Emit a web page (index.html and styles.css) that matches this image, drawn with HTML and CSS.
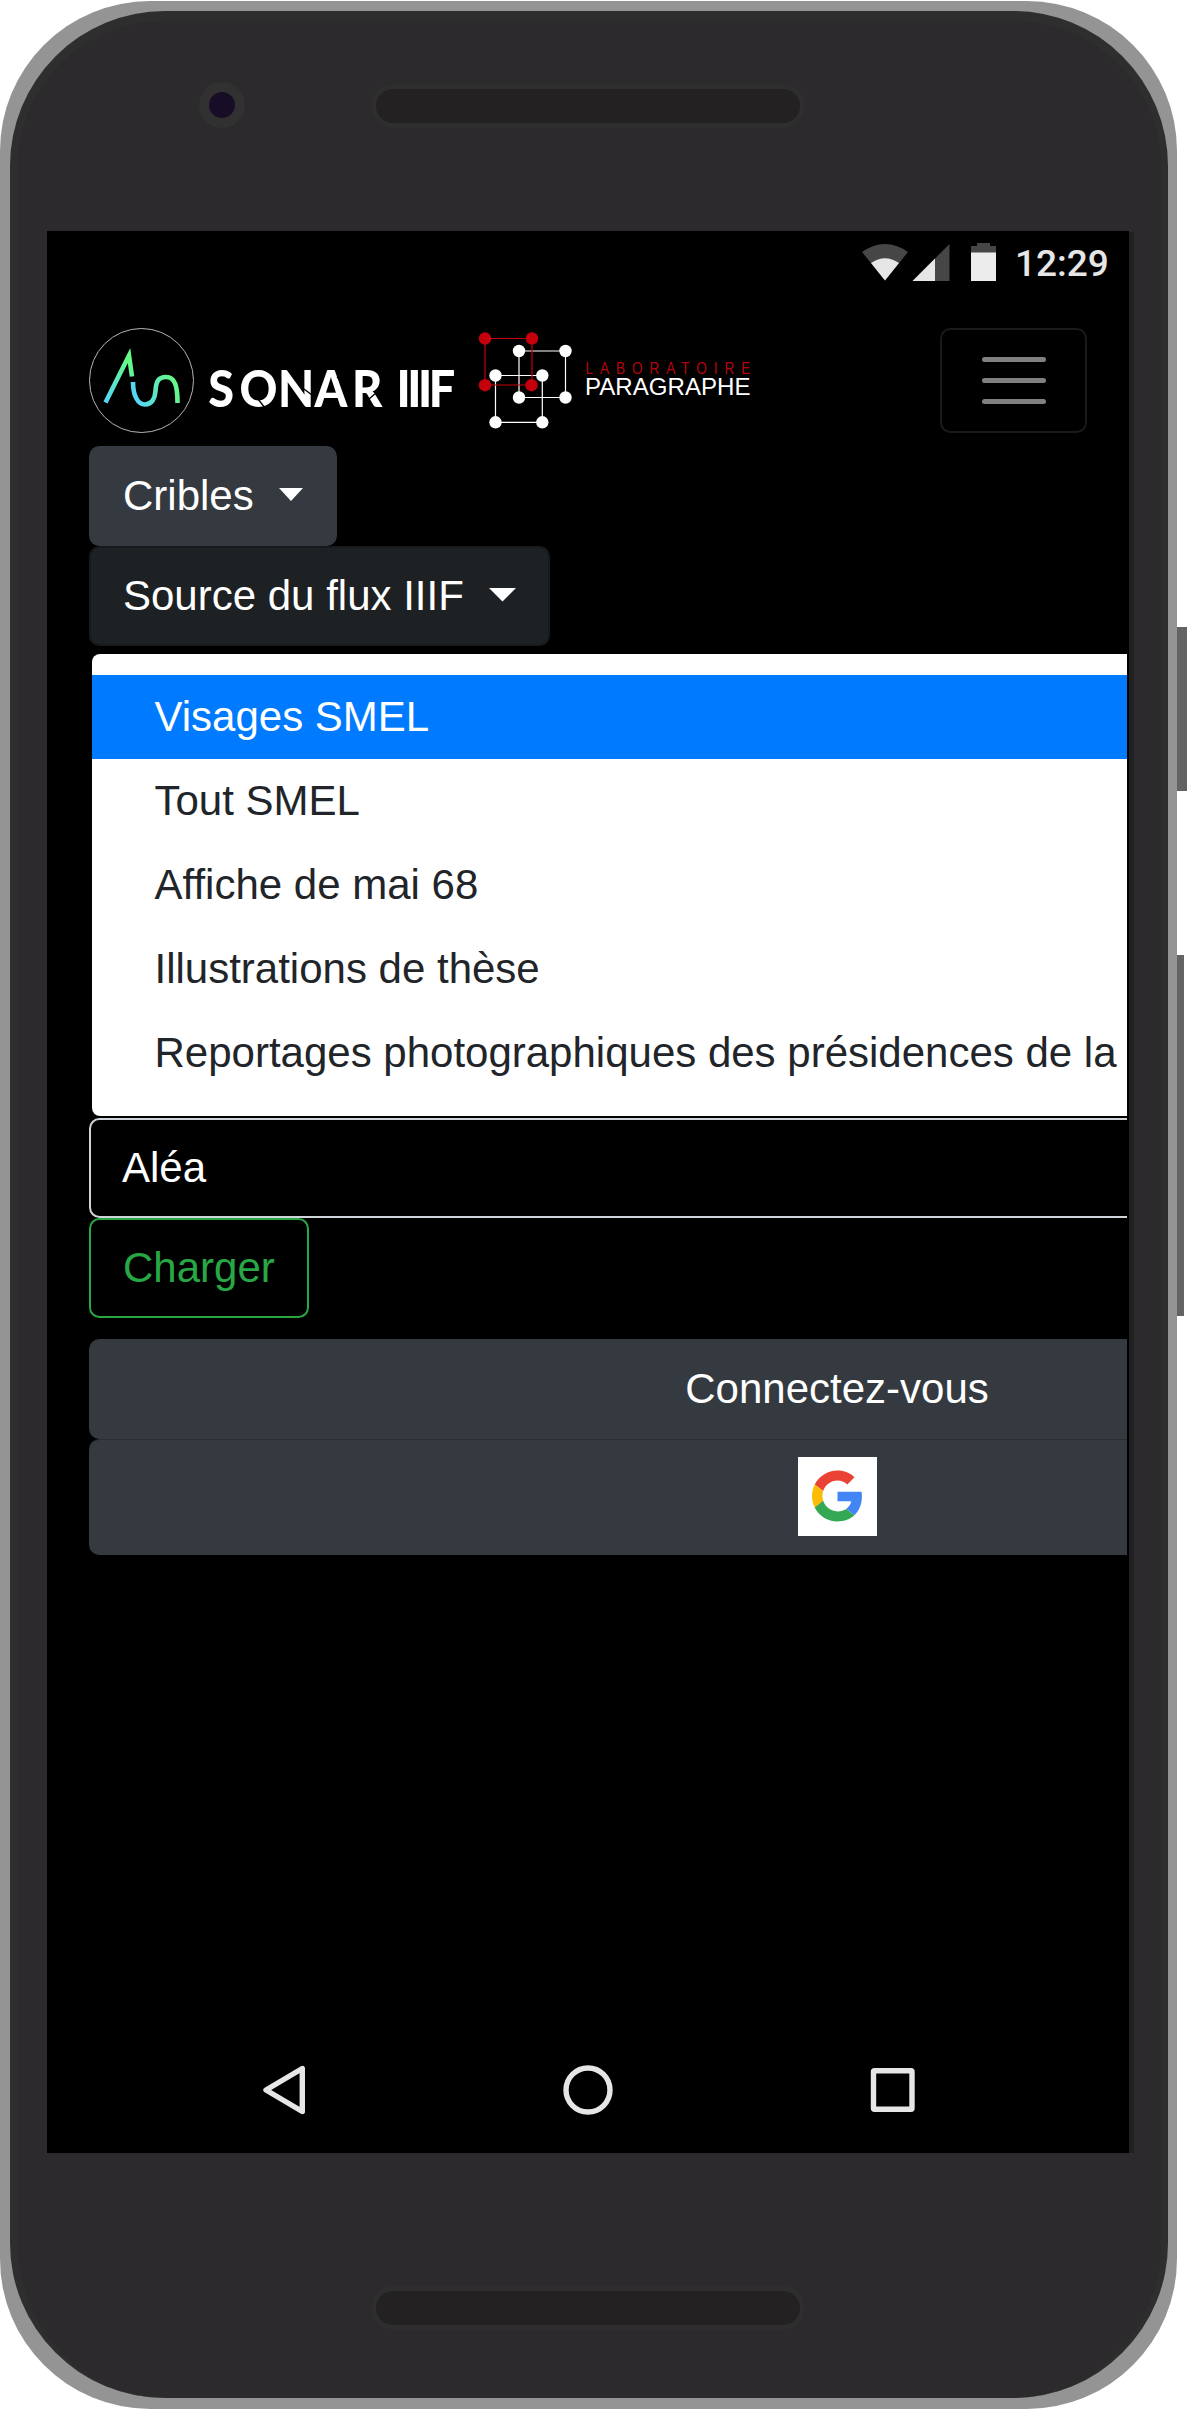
FILE: index.html
```
<!DOCTYPE html>
<html lang="fr">
<head>
<meta charset="utf-8">
<title>Sonar IIIF</title>
<link rel="stylesheet" href="styles.css">
</head>
<body>
<div class="device">
  <div class="side-key side-key-power"></div>
  <div class="side-key side-key-volume"></div>
  <div class="shell">
    <div class="top-bezel">
      <div class="camera"></div>
      <div class="speaker"></div>
    </div>
    <div class="display">
      <div class="screen">
        <div class="status-bar">
          <svg class="status-icons" width="136" height="40" viewBox="861 242 136 40">
            <path fill="#464646" d="M862 252Q885 236 908 252L885 280.500Z"/>
            <path fill="#e6e6e6" d="M871 263Q885 253.500 899 263L885 280.500Z"/>
            <path fill="#464646" d="M949.500 244V281H912.500Z"/>
            <path fill="#e6e6e6" d="M935 258.500V281H912.500Z"/>
            <path fill="#464646" d="M971 253V246h6v-3h13v3h6v7Z"/>
            <path fill="#ececec" d="M971 252.500h25V281h-25Z"/>
          </svg>
          <span class="clock">12:29</span>
        </div>
        <div class="page">
          <div class="navbar">
            <svg class="brand" width="680" height="118" viewBox="89 328 680 118">
              <defs>
                <linearGradient id="wave-a" gradientUnits="userSpaceOnUse" x1="105" y1="400" x2="135" y2="365"><stop offset="0" stop-color="#55d6f5"/><stop offset="1" stop-color="#66fa85"/></linearGradient>
                <linearGradient id="wave-b" gradientUnits="userSpaceOnUse" x1="136" y1="398" x2="176" y2="380"><stop offset="0" stop-color="#55d6f5"/><stop offset="1" stop-color="#66fa85"/></linearGradient>
              </defs>
              <circle cx="141.500" cy="380.500" r="52" fill="none" stroke="#b5b5b5"/>
              <path d="M105.500 402.500L129 355.500L132 376.500" fill="none" stroke="url(#wave-a)" stroke-width="4.600"/>
              <path d="M133 382C133 396 138 404.500 145 404.500C152 404.500 155 398 155.500 391C156 382 158 377 166 377C175 377 177.500 386 177.500 403" fill="none" stroke="url(#wave-b)" stroke-width="4.600"/>
              <text class="wordmark" transform="translate(0 406.500) scale(.9 1)" x="231.500 266 309 349.500 391 440.500 452.500 464.500 476.500">SONARIIIF</text>
              <path d="M258 399l7 9M304 389l12 9M337 378l8-8M369 399l7-6" stroke="#000" stroke-width="1.300"/>
              <g fill="none" stroke-width="1.200">
                <path stroke="#fff" d="M519 351h46.500v46.500H519zM495.500 375.500h46.800v46.800h-46.800z"/>
                <path stroke="#c4000c" d="M485 338.500h47V385h-47z"/>
              </g>
              <g fill="#fff">
                <circle cx="519" cy="351" r="6.200"/><circle cx="565.500" cy="351" r="6.200"/><circle cx="519" cy="397.500" r="6.200"/><circle cx="565.500" cy="397.500" r="6.200"/>
                <circle cx="495.500" cy="375.500" r="6.200"/><circle cx="542.300" cy="375.500" r="6.200"/><circle cx="495.500" cy="422.300" r="6.200"/><circle cx="542.300" cy="422.300" r="6.200"/>
              </g>
              <g fill="#c4000c">
                <circle cx="485" cy="338.500" r="6.200"/><circle cx="532" cy="338.500" r="6.200"/><circle cx="485" cy="385.200" r="6.200"/><circle cx="531.500" cy="385.200" r="6.200"/>
              </g>
              <text class="lab-top" transform="translate(585.500 374) scale(.8 1)" textLength="206" x="0" y="0">LABORATOIRE</text>
              <text class="lab-name" x="585" y="394.500" textLength="165.500" lengthAdjust="spacingAndGlyphs">PARAGRAPHE</text>
            </svg>
            <div class="toggler"><i></i><i></i><i></i></div>
          </div>
          <div class="menu">
            <div class="btn dark"><span class="t-cribles">Cribles</span><svg class="caret" width="24" height="13" viewBox="0 0 24 13"><path d="M0 0h24L12 13z" fill="#fff"/></svg></div>
            <div class="btn darker"><span class="t-source">Source du flux IIIF</span><svg class="caret" width="27" height="14" viewBox="0 0 27 14"><path d="M0 0h27L13.500 13.500z" fill="#fff"/></svg></div>
            <div class="dropdown">
              <div class="item active"><span>Visages SMEL</span></div>
              <div class="item"><span>Tout SMEL</span></div>
              <div class="item"><span>Affiche de mai 68</span></div>
              <div class="item"><span>Illustrations de thèse</span></div>
              <div class="item"><span>Reportages photographiques des présidences de la République</span></div>
            </div>
            <div class="field">Aléa</div>
            <div class="btn outline">Charger</div>
            <div class="btn dark wide">Connectez-vous</div>
            <div class="btn dark wide google">
              <div class="google-box">
                <svg width="51" height="52" viewBox="0 0 48 48">
                  <path fill="#EA4335" d="M24 9.500c3.540 0 6.710 1.220 9.210 3.600l6.850-6.850C35.900 2.380 30.470 0 24 0 14.620 0 6.510 5.380 2.560 13.220l7.980 6.190C12.430 13.720 17.740 9.500 24 9.500z"/>
                  <path fill="#4285F4" d="M46.980 24.550c0-1.570-.15-3.090-.38-4.550H24v9.020h12.940c-.58 2.960-2.260 5.480-4.780 7.180l7.730 6c4.510-4.180 7.090-10.360 7.090-17.650z"/>
                  <path fill="#FBBC05" d="M10.530 28.590c-.48-1.450-.76-2.990-.76-4.590s.27-3.140.76-4.590l-7.980-6.190C.92 16.460 0 20.120 0 24c0 3.880.92 7.540 2.560 10.780l7.970-6.190z"/>
                  <path fill="#34A853" d="M24 48c6.480 0 11.930-2.130 15.890-5.810l-7.730-6c-2.150 1.450-4.920 2.300-8.160 2.300-6.260 0-11.570-4.220-13.470-9.910l-7.980 6.190C6.510 42.620 14.620 48 24 48z"/>
                </svg>
              </div>
            </div>
          </div>
        </div>
        <svg class="system-nav" width="1082" height="126" viewBox="47 2027 1082 126" fill="none" stroke="#e6e6e6" stroke-width="5.400" stroke-linejoin="round">
          <path d="M302.300 2068.500V2111.500L266 2090Z"/>
          <circle cx="588" cy="2090" r="22"/>
          <rect x="873.500" y="2070.700" width="38.500" height="38.500" rx="1"/>
        </svg>
      </div>
      <div class="screen-edge"></div>
    </div>
    <div class="bottom-bezel"><div class="speaker"></div></div>
  </div>
</div>
</body>
</html>
```
FILE: styles.css
```
* { box-sizing: border-box; }
html, body { margin: 0; background: #fff; }
body { font-family: "Liberation Sans", Arial, sans-serif; font-size: 42px; line-height: 63px; }
.device { position: relative; width: 1187px; height: 2410px; padding-top: 1px; overflow: hidden; }
.side-key { position: absolute; left: 1177px; background: #646262; }
.side-key-power { top: 627px; width: 10px; height: 164px; }
.side-key-volume { top: 955px; width: 7px; height: 361px; }
.shell {
  position: relative; width: 1177px; height: 2408px; padding: 9.500px 9px 11px 10px;
  border-radius: 150px; background: #949494;
  display: flex; flex-direction: column;
}
.shell::before {
  content: ""; position: absolute; inset: 9.500px 9px 11px 10px; border-radius: 155px;
  background: #2c2a2c; border: solid #2d2e2d; border-width: 10px 7px 0 8px;
}
.top-bezel, .display, .bottom-bezel { position: relative; }
.top-bezel { height: 220.500px; display: flex; padding: 73px 0 0 189px; gap: 126px; }
.camera { width: 46px; height: 46px; border: 10px solid #303130; border-radius: 50%; background: #170d26; margin-top: -2px; }
.speaker { width: 434px; height: 44px; border: 5.500px solid #2d2e2d; border-radius: 22px; background: #232122; }
.bottom-bezel { padding: 133px 0 0 361px; }
.display { display: flex; height: 1922px; padding-left: 37px; }
.screen { width: 1082px; height: 1922px; background: #000; display: flex; flex-direction: column; overflow: hidden; }
.screen-edge { width: 5px; margin-top: 1px; background: #212121; }
.status-bar { height: 97px; display: flex; justify-content: flex-end; padding: 11px 22px 0 0; gap: 18px; }
.clock { font: 500 37px/44px Roboto, sans-serif; color: #e6e6e6; width: 92px; padding-top: 0; white-space: nowrap; }
.page { width: 1080px; padding-left: 42px; overflow: hidden; flex: 1; }
.navbar { display: flex; justify-content: space-between; padding-right: 40px; }
.brand { display: block; }
.wordmark { font: 900 52px Lato, sans-serif; fill: #fff; }
.lab-top { font: 17px "Liberation Sans", sans-serif; fill: #b5040f; }
.lab-name { font: 24px "Liberation Sans", sans-serif; fill: #fff; }
.toggler {
  width: 147px; height: 105px; border: 2.600px solid #1a1a1a; border-radius: 10.500px;
  display: flex; flex-direction: column; align-items: center; justify-content: center; gap: 15.500px;
}
.toggler i { width: 64px; height: 5.500px; border-radius: 3px; background: #808080; }
.menu { display: flex; flex-direction: column; align-items: flex-start; width: 1496px; }
.btn {
  height: 100px; padding: 16px 32px; border: 2.600px solid transparent; border-radius: 10.500px;
  color: #fff; white-space: nowrap; display: flex;
}
.dark { background: #343a40; border-color: #343a40; }
.darker { background: #1d2124; border-color: #171a1d; }
.caret { margin: 24px 0 0 25px; }
.dropdown {
  width: 1491px; margin: 7.500px 0 2.500px 2.500px; padding: 21px 0; height: 462px;
  background: #fff; border-radius: 8px; color: #212529;
}
.item { height: 84px; padding: 10.500px 63px; white-space: nowrap; }
.active { background: #007bff; color: #fff; }
.field { width: 1496px; height: 100px; padding: 16px 31px; border: 2.600px solid #ced4da; border-radius: 10.500px; color: #fff; }
.outline { border-color: #28a745; color: #28a745; margin-bottom: 20.500px; }
.wide { width: 1496px; justify-content: center; }
.google { height: 116px; padding: 0; align-items: center; border-top: 1px solid #2a2e33; }
.google-box { width: 79px; height: 79px; background: #fff; display: flex; align-items: center; justify-content: center; }
.system-nav { display: block; flex: none; }
```
